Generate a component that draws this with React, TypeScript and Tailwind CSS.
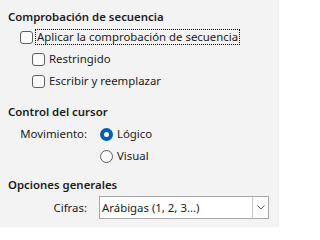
import { useState } from "react";

const Checkbox = ({ label, focused }: { label: string; focused?: boolean }) => (
  <label className="flex h-[22px] items-center">
    <span className="h-[13px] w-[13px] shrink-0 rounded-[3px] border border-[#5f5f5f] bg-[#fbfbfb]" />
    <span
      className={
        "ml-[3px] px-[1px] leading-[14px] " +
        (focused ? "outline outline-1 outline-dotted outline-[#000]" : "")
      }
    >
      {label}
    </span>
  </label>
);

const Radio = ({ label, checked, onClick }: { label: string; checked: boolean; onClick: () => void }) => (
  <label className="flex h-[22px] items-center" onClick={onClick}>
    {checked ? (
      <span className="flex h-[13px] w-[13px] shrink-0 items-center justify-center rounded-full bg-[#005fb8]">
        <span className="h-[5px] w-[5px] rounded-full bg-white" />
      </span>
    ) : (
      <span className="h-[13px] w-[13px] shrink-0 rounded-full border border-[#5f5f5f] bg-[#fbfbfb]" />
    )}
    <span className="ml-[4px]">{label}</span>
  </label>
);

export default function App() {
  const [movement, setMovement] = useState("logico");

  return (
    <div className="h-[227px] w-[279px] bg-[#f3f3f3] pl-[8px] pt-[9px] text-[11.4px] text-[#1b1b1b] [font-family:'Noto_Sans',sans-serif]">
      <h2 className="h-[16px] font-semibold leading-[16px]">Comprobación de secuencia</h2>
      <div className="mt-[1px] pl-[12px]">
        <Checkbox label="Aplicar la comprobación de secuencia" focused />
        <div className="pl-[12px]">
          <Checkbox label="Restringido" />
          <Checkbox label="Escribir y reemplazar" />
        </div>
      </div>

      <h2 className="mt-[12px] h-[16px] font-semibold leading-[16px]">Control del cursor</h2>
      <div className="mt-[3px] flex">
        <span className="flex h-[22px] w-[92px] items-center justify-end pr-[13px]">Movimiento:</span>
        <div>
          <Radio label="Lógico" checked={movement === "logico"} onClick={() => setMovement("logico")} />
          <Radio label="Visual" checked={movement === "visual"} onClick={() => setMovement("visual")} />
        </div>
      </div>

      <h2 className="mt-[10px] h-[16px] font-semibold leading-[16px]">Opciones generales</h2>
      <div className="mt-[3px] flex items-center">
        <span className="w-[91px] pr-[12px] text-right">Cifras:</span>
        <div className="flex h-[23px] w-[170px] items-stretch border border-[#a8a8a8] bg-white">
          <span className="flex flex-1 items-center pl-[2px]">Arábigas (1, 2, 3...)</span>
          <span className="flex w-[16px] items-center justify-center border-l border-[#c8c8c8] bg-[#fdfdfd]">
            <svg width="8" height="5" viewBox="0 0 8 5" fill="none">
              <path d="M0.5 0.5 L4 4 L7.5 0.5" stroke="#606060" strokeWidth="1" />
            </svg>
          </span>
        </div>
      </div>
    </div>
  );
}
